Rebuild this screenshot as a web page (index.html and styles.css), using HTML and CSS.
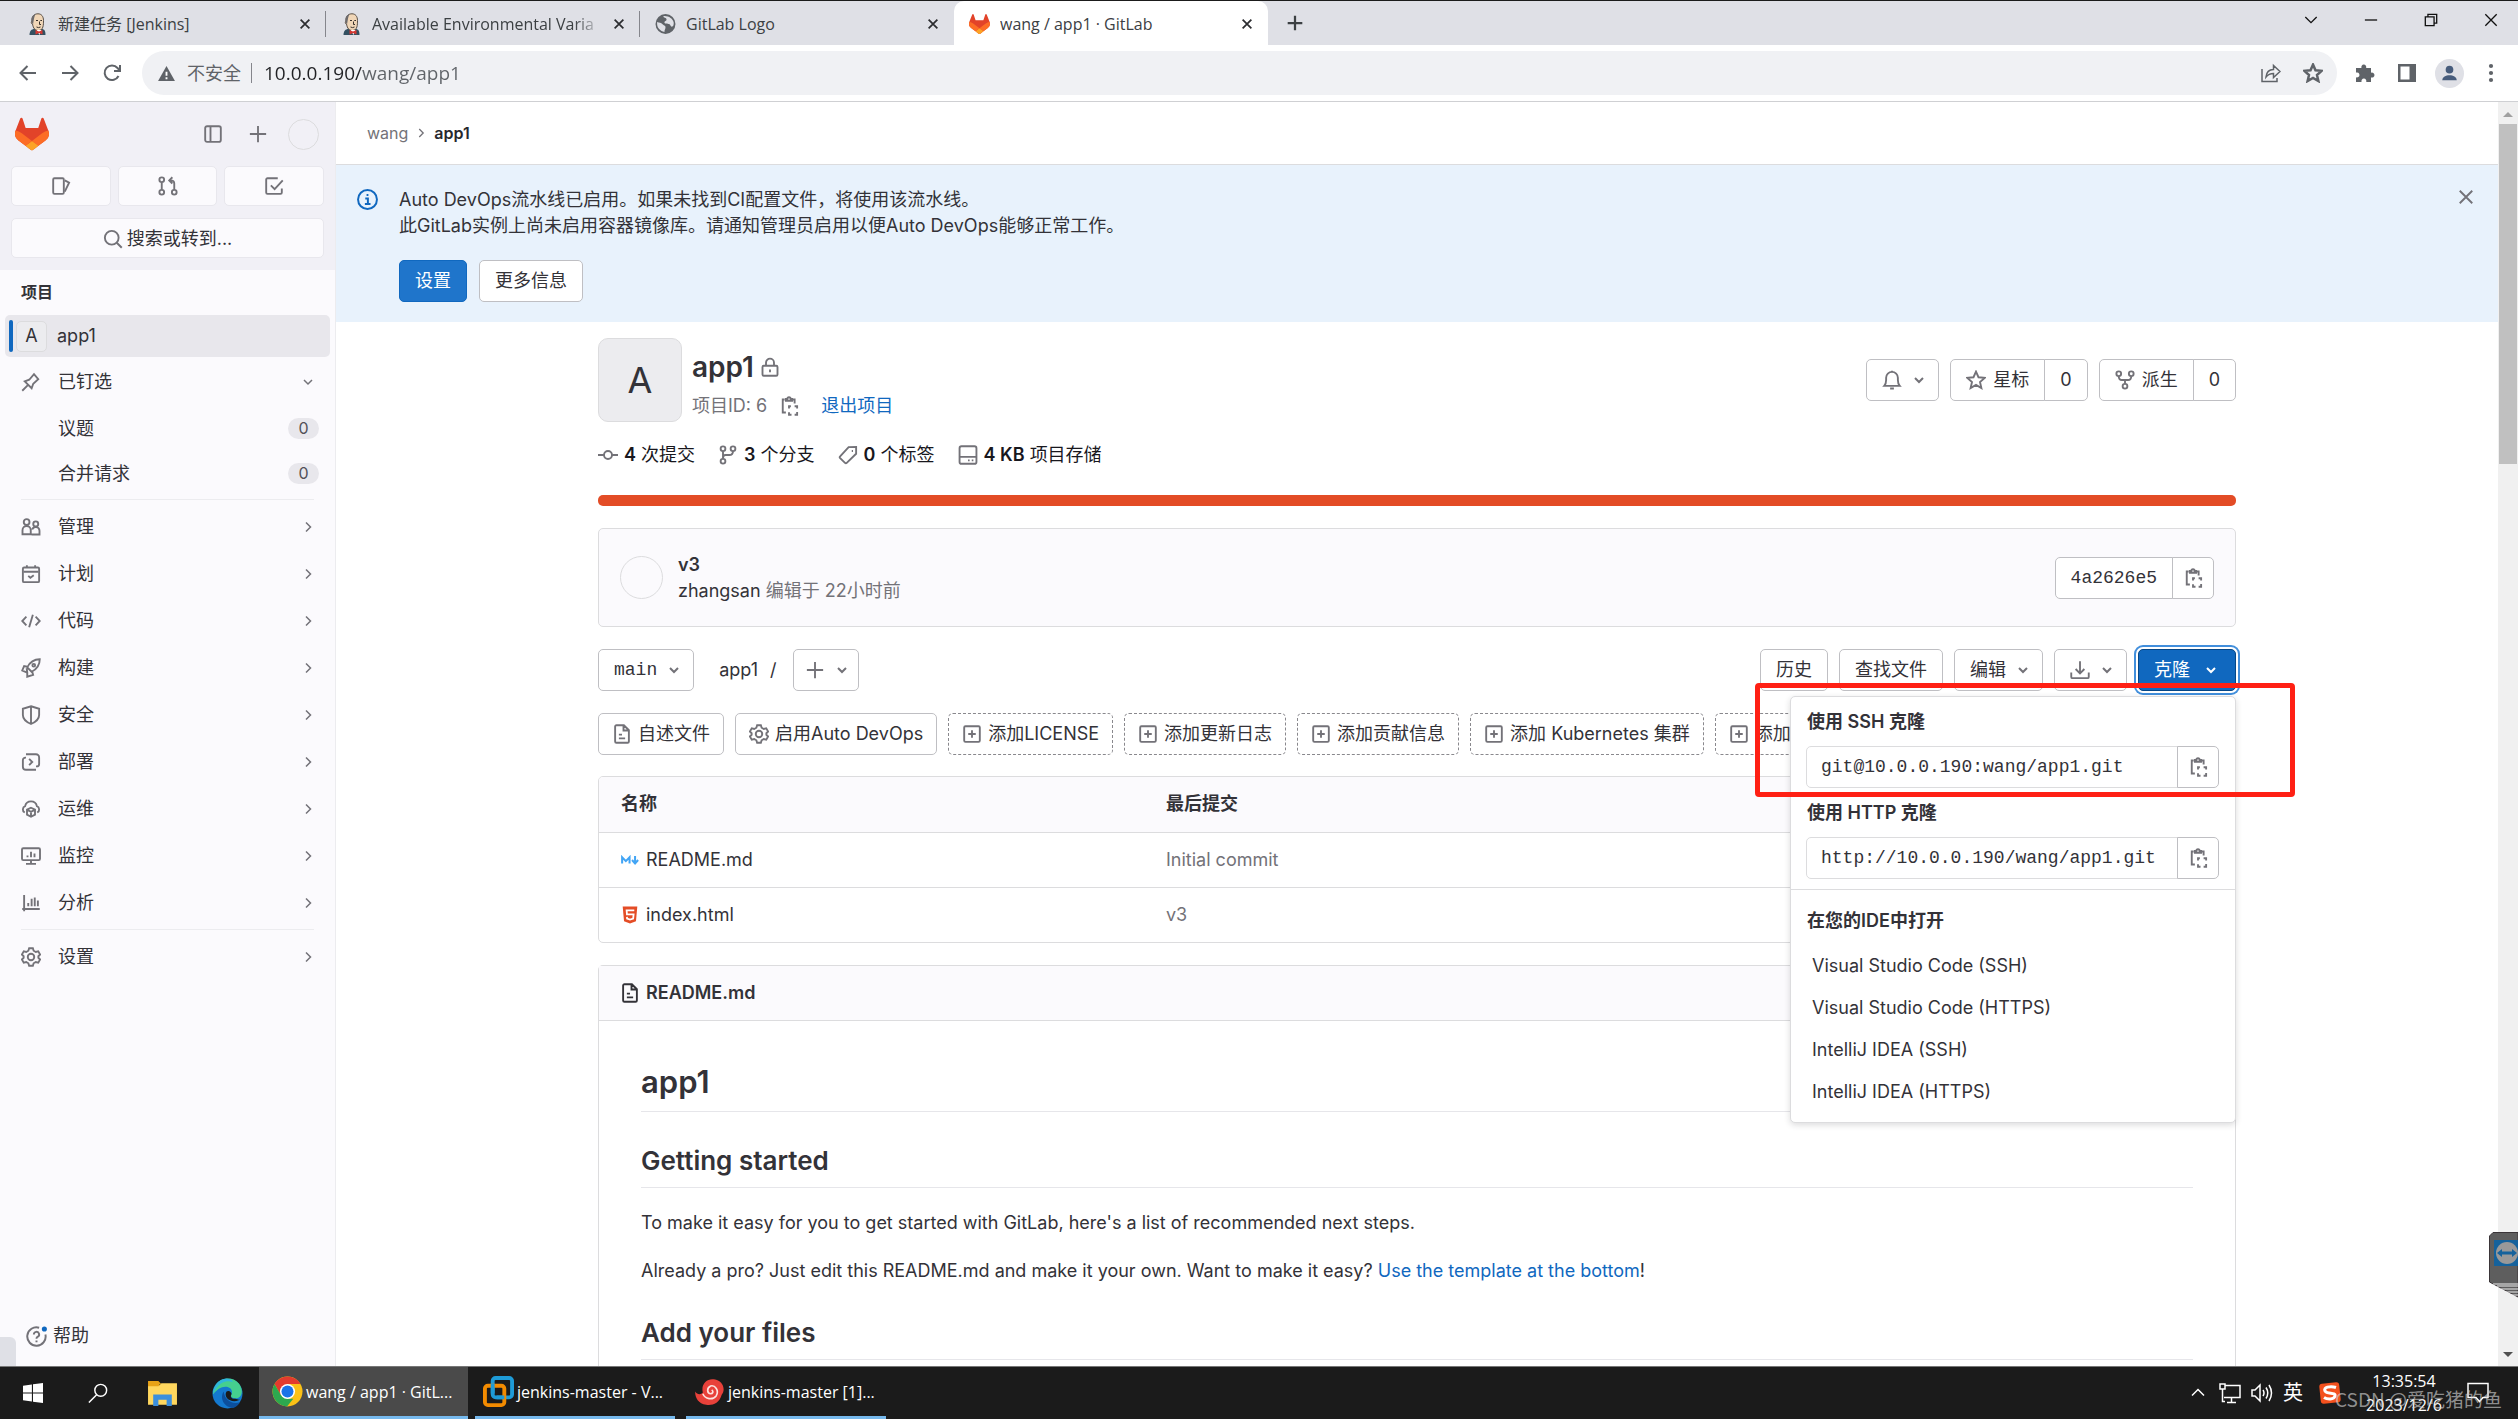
FILE: index.html
```html
<!DOCTYPE html>
<html lang="zh-CN">
<head>
<meta charset="utf-8">
<title>wang / app1 · GitLab</title>
<link rel="stylesheet" href="styles.css">
</head>
<body>
<svg class="sprite" aria-hidden="true">
  <symbol id="chev-right" viewBox="0 0 16 16"><path d="M6 3.500 10.500 8 6 12.500"/></symbol>
  <symbol id="chev-down" viewBox="0 0 16 16"><path d="M4 6l4 4 4-4"/></symbol>
  <symbol id="plus" viewBox="0 0 16 16"><path d="M8 1.500v13M1.500 8h13"/></symbol>
  <symbol id="close" viewBox="0 0 16 16"><path d="M3 3l10 10M13 3L3 13"/></symbol>
  <symbol id="copy" viewBox="0 0 16 16"><path d="M4.500 2.800H3v10.400h2.500M10.500 2.800H12.500V6M5.500 3.800V2.300h1.200a1.300 1.300 0 0 1 2.600 0h1.200v1.500zM8 10V8.200h1.500M12.500 8.200H14.500V10M14.500 12.800V15h-2M10 15H8v-2"/></symbol>
  <symbol id="search" viewBox="0 0 16 16"><circle cx="7" cy="7" r="5.500"/><path d="M11 11l4 4"/></symbol>
  <symbol id="panel" viewBox="0 0 16 16"><rect x="1.750" y="1.750" width="12.500" height="12.500" rx="1.500"/><path d="M6 2v12"/></symbol>
  <symbol id="issues" viewBox="0 0 16 16"><rect x="1.750" y="1.750" width="8.500" height="12.500" rx="1"/><path d="M11 3.500l3.500 1.800L11 12.500"/></symbol>
  <symbol id="merge" viewBox="0 0 16 16"><circle cx="3" cy="3" r="1.900"/><circle cx="3" cy="13" r="1.900"/><circle cx="13" cy="13" r="1.900"/><path d="M3 5v6M13 11V6q0-2.500-3-2.500M11.500 1L9 3.500 11.500 6"/></symbol>
  <symbol id="todo" viewBox="0 0 16 16"><path d="M11 1.750H2.750a1 1 0 0 0-1 1v10.500a1 1 0 0 0 1 1h10.500a1 1 0 0 0 1-1V10M5.500 7.500L8.500 10.500 15 3.500"/></symbol>
  <symbol id="info" viewBox="0 0 16 16"><circle cx="8" cy="8" r="7.200"/><path d="M6.300 7.300H8.300v4M6 11.500h4.300M7.300 4.500h1.400"/></symbol>
  <symbol id="pin" viewBox="0 0 16 16"><path d="M1 15l4.500-4.500M3 7.500l5.500 5.500 1.300-3.600 4-3.600L10.400 1.700 6.600 6.200z"/></symbol>
  <symbol id="users" viewBox="0 0 16 16"><circle cx="4.500" cy="4" r="2.300"/><path d="M1.200 13.800V10.500a3.300 3.300 0 0 1 6.600 0v3.300zM8.500 14h6.300v-3a3 3 0 0 0-5.800-1"/><circle cx="11.800" cy="5.500" r="2"/></symbol>
  <symbol id="calendar" viewBox="0 0 16 16"><rect x="1.500" y="2.800" width="13" height="11.700" rx="1"/><path d="M2 6.200h12M4.700 1v2M11.300 1v2M5.800 9.500L7.500 11l2.700-2"/></symbol>
  <symbol id="code" viewBox="0 0 16 16"><path d="M4.300 4.500L1 8l3.300 3.500M11.700 4.500L15 8l-3.300 3.500M9.500 3l-3 10"/></symbol>
  <symbol id="rocket" viewBox="0 0 16 16"><path d="M5 7.500C7 3.500 10.500 1 15 1c0 4.500-2.500 8-6.500 10zM5 7L2.500 6.500 1 10l3.500 1.500M9 11l.7 2.500L5 15v-3.500L4.500 8"/><circle cx="10.200" cy="5.800" r="1.100"/></symbol>
  <symbol id="shield" viewBox="0 0 16 16"><path d="M8 1L14.500 3v5c0 3-2.500 5.500-6.500 7.200C4 13.500 1.500 11 1.500 8V3zM8 1v14"/></symbol>
  <symbol id="deploy" viewBox="0 0 16 16"><path d="M4 1.800h8a2.500 2.500 0 0 1 2.500 2.500v5.200a2 2 0 0 1-2 2H12M12 14.200H4a2.500 2.500 0 0 1-2.500-2.500V6.500a2 2 0 0 1 2-2H4M6.500 5.500L9 8l-2.500 2.500"/></symbol>
  <symbol id="cloud" viewBox="0 0 16 16"><path d="M3 10.800A2.800 2.800 0 0 1 3.300 5.700a4.800 4.800 0 0 1 9.400 0 2.800 2.800 0 0 1 .3 5.100M8 7l3.200 1.500V12.500L8 14.200 4.800 12.500V8.500zM5 8.700L8 10.200l3-1.500M8 10v4"/></symbol>
  <symbol id="monitor" viewBox="0 0 16 16"><rect x=".8" y="1.750" width="14.400" height="9.500" rx="1"/><path d="M8 11.500v2.500M4 14.300h8M5.200 7.500v1.500M8 4.500V9M10.800 6v3"/></symbol>
  <symbol id="chart" viewBox="0 0 16 16"><path d="M2.500 1.500v13M1 12.800h14M5.800 8v2.500M8.500 4.500v6M11 3.500v7M13.500 6v4.500"/></symbol>
  <symbol id="gear" viewBox="0 0 16 16"><path d="M6.500 1h3l.6 2 1.700 1 2-.6 1.500 2.600L13.900 7.400v1.200l1.400 1.400-1.500 2.600-2-.6-1.700 1-.6 2h-3l-.6-2-1.700-1-2 .6L.7 10l1.400-1.400V7.400L.7 6l1.500-2.600 2 .6 1.700-1z"/><circle cx="8" cy="8" r="2.600"/></symbol>
  <symbol id="help" viewBox="0 0 16 16"><path d="M10 1.300A7 7 0 1 0 14.800 6.500"/><path d="M6 6.500a2 2 0 1 1 2.800 1.800q-.8.400-.8 1.400M8 11v1.400"/><circle cx="14" cy="2.300" r="1.200" class="dot"/></symbol>
  <symbol id="lock" viewBox="0 0 16 16"><rect x="2" y="7" width="12" height="8" rx="1"/><path d="M4.800 7V4.500a3.200 3.200 0 0 1 6.400 0V7M8 10v2.200"/></symbol>
  <symbol id="commit" viewBox="0 0 16 16"><circle cx="8" cy="8" r="3.200"/><path d="M0 8h4.800M11.200 8H16"/></symbol>
  <symbol id="branch" viewBox="0 0 16 16"><circle cx="4" cy="3" r="1.900"/><circle cx="4" cy="13" r="1.900"/><circle cx="12" cy="3" r="1.900"/><path d="M4 5v6M12 5q0 3-3 3H6Q4 8 4 10.500"/></symbol>
  <symbol id="tag" viewBox="0 0 16 16"><path d="M8.500 1.700L14.500 1.500 14.500 7 7 14.300a1 1 0 0 1-1.400 0L1.700 10.500a1 1 0 0 1 0-1.400z"/><path d="M11 4.800h1"/></symbol>
  <symbol id="disk" viewBox="0 0 16 16"><rect x="1.250" y="1" width="13.500" height="14" rx="1.500"/><path d="M1.500 9.500h13M8 12.300h1.300M11 12.300h1.300"/></symbol>
  <symbol id="bell" viewBox="0 0 16 16"><path d="M1.800 12.700Q3.300 11 3.300 8V6.200a4.700 4.700 0 0 1 9.400 0V8q0 3 1.500 4.700zM6.500 14.800h3M8 .5v1"/></symbol>
  <symbol id="star" viewBox="0 0 16 16"><path d="M8 1.300l2 4.500 4.900.5-3.700 3.300 1.100 4.800L8 11.900l-4.300 2.500 1.100-4.800L1.100 6.300 6 5.800z"/></symbol>
  <symbol id="fork" viewBox="0 0 16 16"><circle cx="3" cy="3" r="1.900"/><circle cx="13" cy="3" r="1.900"/><circle cx="8" cy="13" r="1.900"/><path d="M3 5q0 3 2.500 3h5Q13 8 13 5M8 8v3"/></symbol>
  <symbol id="download" viewBox="0 0 16 16"><path d="M8 1v9.500M4.500 7.200L8 10.700l3.500-3.500M1 10v3.500a1 1 0 0 0 1 1h12a1 1 0 0 0 1-1V10"/></symbol>
  <symbol id="doc" viewBox="0 0 16 16"><path d="M9.500 1H3.500a1 1 0 0 0-1 1v12a1 1 0 0 0 1 1h9a1 1 0 0 0 1-1V5zM9.200 1v4.200h4M5.500 8.500H8M5.500 11.500h5"/></symbol>
  <symbol id="add" viewBox="0 0 16 16"><rect x="1.750" y="1.750" width="12.500" height="12.500" rx="1"/><path d="M8 5v6M5 8h6"/></symbol>
  <symbol id="tanuki" viewBox="0 0 25 24"><path fill="#e24329" d="m24.507 9.500-.034-.09L21.082.562a.896.896 0 0 0-1.694.091l-2.290 7.010H7.825L5.535.653a.898.898 0 0 0-1.694-.09L.451 9.411.416 9.500a6.297 6.297 0 0 0 2.090 7.278l.012.010.030.022 5.160 3.867 2.560 1.935 1.554 1.176a1.051 1.051 0 0 0 1.268 0l1.555-1.176 2.560-1.935 5.197-3.890.014-.010A6.297 6.297 0 0 0 24.507 9.500Z"/><path fill="#fc6d26" d="m24.507 9.500-.034-.09a11.440 11.440 0 0 0-4.560 2.051l-7.447 5.632 4.742 3.584 5.197-3.890.014-.010A6.297 6.297 0 0 0 24.507 9.500Z"/><path fill="#fca326" d="m7.707 20.677 2.560 1.935 1.555 1.176a1.051 1.051 0 0 0 1.268 0l1.555-1.176 2.560-1.935-4.743-3.584-4.755 3.584Z"/><path fill="#fc6d26" d="M5.010 11.461a11.430 11.430 0 0 0-4.560-2.050L.416 9.500a6.297 6.297 0 0 0 2.090 7.278l.012.010.030.022 5.160 3.867 4.745-3.584-7.444-5.632Z"/></symbol>
  <symbol id="butler" viewBox="0 0 20 22"><path fill="#335061" d="M2 22c0-4 2-6 5-6h7c3 0 4 2 4 6z"/><path fill="#f0d6b7" stroke="#4a4038" stroke-width=".9" d="M4.500 8C4 3 7 .8 10.500.8S16 3.500 16 7.500s0 10-5 10S5.500 13 5 11C3.500 11 3.500 8.500 4.500 8z"/><path fill="#6d6b6d" d="M4 9C3.500 4 5.500 1.500 8 1.200 6.500 4 6.500 6 6 8.500l-.5 3z"/><path fill="none" stroke="#3a322c" d="M8.500 7.500h2M12.800 7.500h1.700M12 8.500v3h1.500M9 14q2 1.200 4 0"/><path fill="#fff" d="M9 17h5l-2 5z"/><path fill="#d33833" d="M8 17l3.500 1.500L15 17v4.500l-3.500-1.500L8 21.500z"/></symbol>
</svg>

<div class="tabs" role="tablist">
  <div class="tab"><svg class="fav"><use href="#butler"/></svg><span class="tab-title">新建任务 [Jenkins]</span><button class="tab-x" aria-label="关闭"><svg class="icon"><use href="#close"/></svg></button></div>
  <div class="tab"><svg class="fav"><use href="#butler"/></svg><span class="tab-title fade">Available Environmental Varia</span><button class="tab-x" aria-label="关闭"><svg class="icon"><use href="#close"/></svg></button></div>
  <div class="tab plain"><svg class="fav" viewBox="0 0 20 20"><circle cx="10" cy="10" r="9.500" fill="#5f6368"/><path fill="#dfe0e6" d="M2 8c2 1 4 .5 5 2s3 1 3 3-1 2-1 4.500C5 17 2 13.500 2 10zM8 2.500c0 2 3 1 3 3s-2 1.500-2 3 3 1 4.500 1.500 1 2.500 2.500 2.500 2-2 1.800-4C17 5 13 2 8 2.500z"/></svg><span class="tab-title">GitLab Logo</span><button class="tab-x" aria-label="关闭"><svg class="icon"><use href="#close"/></svg></button></div>
  <div class="tab active"><svg class="fav"><use href="#tanuki"/></svg><span class="tab-title">wang / app1 · GitLab</span><button class="tab-x" aria-label="关闭"><svg class="icon"><use href="#close"/></svg></button></div>
  <button class="tab-new" aria-label="新标签页"><svg class="icon"><use href="#plus"/></svg></button>
  <div class="win">
    <button aria-label="搜索标签页"><svg viewBox="0 0 16 16"><path d="M1.500 4.500L8 11l6.500-6.500"/></svg></button>
    <button aria-label="最小化"><svg viewBox="0 0 16 16"><path d="M1 8h14"/></svg></button>
    <button aria-label="还原"><svg viewBox="0 0 16 16"><path d="M1.500 4.500h10v10h-10zM4.500 4.500v-3h10v10h-3"/></svg></button>
    <button aria-label="关闭窗口"><svg viewBox="0 0 16 16"><path d="M1.500 1.500l13 13M14.500 1.500l-13 13"/></svg></button>
  </div>
</div>

<div class="toolbar">
  <button class="nav" aria-label="后退"><svg viewBox="0 0 20 20"><path d="M18 10H3M9.500 3L2.500 10l7 7"/></svg></button>
  <button class="nav" aria-label="前进"><svg viewBox="0 0 20 20"><path d="M2 10h15M10.500 3l7 7-7 7"/></svg></button>
  <button class="nav" aria-label="刷新"><svg viewBox="0 0 20 20"><path d="M16.500 13A7.300 7.300 0 1 1 15.500 5l2 2.500M18 2v6h-6"/></svg></button>
  <div class="omni">
    <svg class="warn" viewBox="0 0 18 16"><path fill="#5f6368" d="M9 0l9 16H0z"/><path stroke="#fff" stroke-width="2" d="M9 6v4.500M9 12v2"/></svg>
    <label for="url">不安全</label>
    <input id="url" value="10.0.0.190/wang/app1">
    <button aria-label="分享"><svg viewBox="0 0 20 20"><path class="thin" d="M1 6v12.500h15V15M5 14c.5-5 3.500-7.500 7.500-7.500V2.500L19 8.500l-6.500 6v-4C9 10.500 7 11.500 5 14z"/></svg></button>
    <button aria-label="收藏"><svg viewBox="0 0 16 16"><use href="#star"/></svg></button>
  </div>
  <div class="ext">
    <button aria-label="扩展程序"><svg viewBox="0 0 20 20"><path fill="#5f6368" stroke="none" d="M1 5h5.500a2.500 2.500 0 1 1 4.600 0H16v4.800a2.500 2.500 0 1 1 0 4.600V19h-4.800a2.500 2.500 0 1 0-4.600 0H1v-4.800a2.500 2.500 0 1 0 0-4.600z"/></svg></button>
    <button aria-label="侧边栏"><svg viewBox="0 0 20 20"><path fill="#5f6368" fill-rule="evenodd" stroke="none" d="M1 1h18v18H1zM3.500 3.500v13h9v-13z"/></svg></button>
    <button aria-label="用户"><span class="me"><svg viewBox="0 0 20 20"><circle cx="10" cy="5.500" r="4.500" fill="#475c7c" stroke="none"/><path fill="#475c7c" stroke="none" d="M1.500 18c0-8 17-8 17 0z"/></svg></span></button>
    <button aria-label="菜单"><svg viewBox="0 0 20 20"><g fill="#5f6368" stroke="none"><circle cx="10" cy="3" r="2.100"/><circle cx="10" cy="10" r="2.100"/><circle cx="10" cy="17" r="2.100"/></g></svg></button>
  </div>
</div>

<div class="page">
  <aside class="sidebar">
    <div class="side-top">
      <div class="side-row">
        <a href="#" aria-label="首页"><svg class="logo"><use href="#tanuki"/></svg></a>
        <button class="bare" aria-label="收起侧边栏"><svg class="icon"><use href="#panel"/></svg></button>
        <button class="bare" aria-label="新建"><svg class="icon"><use href="#plus"/></svg></button>
        <button class="circle small" aria-label="用户菜单"></button>
      </div>
      <div class="side-row three">
        <a class="tile" href="#" aria-label="议题"><svg class="icon"><use href="#issues"/></svg></a>
        <a class="tile" href="#" aria-label="合并请求"><svg class="icon"><use href="#merge"/></svg></a>
        <a class="tile" href="#" aria-label="待办事项"><svg class="icon"><use href="#todo"/></svg></a>
      </div>
      <button class="tile wide"><svg class="icon"><use href="#search"/></svg>搜索或转到...</button>
    </div>
    <nav class="menu">
      <h2>项目</h2>
      <a class="current" href="#"><span class="letter">A</span>app1</a>
      <a class="pinned" href="#"><svg class="icon"><use href="#pin"/></svg>已钉选<svg class="icon chev"><use href="#chev-down"/></svg></a>
      <a class="sub" href="#">议题<span class="badge">0</span></a>
      <a class="sub" href="#">合并请求<span class="badge">0</span></a>
      <hr>
      <a href="#"><svg class="icon"><use href="#users"/></svg>管理<svg class="icon chev"><use href="#chev-right"/></svg></a>
      <a href="#"><svg class="icon"><use href="#calendar"/></svg>计划<svg class="icon chev"><use href="#chev-right"/></svg></a>
      <a href="#"><svg class="icon"><use href="#code"/></svg>代码<svg class="icon chev"><use href="#chev-right"/></svg></a>
      <a href="#"><svg class="icon"><use href="#rocket"/></svg>构建<svg class="icon chev"><use href="#chev-right"/></svg></a>
      <a href="#"><svg class="icon"><use href="#shield"/></svg>安全<svg class="icon chev"><use href="#chev-right"/></svg></a>
      <a href="#"><svg class="icon"><use href="#deploy"/></svg>部署<svg class="icon chev"><use href="#chev-right"/></svg></a>
      <a href="#"><svg class="icon"><use href="#cloud"/></svg>运维<svg class="icon chev"><use href="#chev-right"/></svg></a>
      <a href="#"><svg class="icon"><use href="#monitor"/></svg>监控<svg class="icon chev"><use href="#chev-right"/></svg></a>
      <a href="#"><svg class="icon"><use href="#chart"/></svg>分析<svg class="icon chev"><use href="#chev-right"/></svg></a>
      <hr>
      <a href="#"><svg class="icon"><use href="#gear"/></svg>设置<svg class="icon chev"><use href="#chev-right"/></svg></a>
    </nav>
    <button class="help"><svg class="icon"><use href="#help"/></svg>帮助</button>
    <div class="status"></div>
  </aside>

  <main class="main">
    <nav class="crumbs"><a href="#">wang</a><svg class="icon"><use href="#chev-right"/></svg><a class="here" href="#">app1</a></nav>
    <section class="alert">
      <svg class="icon"><use href="#info"/></svg>
      <div class="alert-body">
        <p>Auto DevOps流水线已启用。如果未找到CI配置文件，将使用该流水线。<br>此GitLab实例上尚未启用容器镜像库。请通知管理员启用以便Auto DevOps能够正常工作。</p>
        <div class="alert-actions"><button class="btn primary">设置</button><button class="btn">更多信息</button></div>
      </div>
      <button class="bare" aria-label="关闭提示"><svg class="icon"><use href="#close"/></svg></button>
    </section>

    <div class="content">
      <header class="project">
        <div class="avatar">A</div>
        <div class="names">
          <h1>app1<svg class="icon"><use href="#lock"/></svg></h1>
          <div class="ids"><span>项目ID: 6</span><button class="bare" aria-label="复制项目ID"><svg class="icon"><use href="#copy"/></svg></button><a href="#">退出项目</a></div>
        </div>
        <div class="actions">
          <button class="btn" aria-label="通知"><svg class="icon"><use href="#bell"/></svg><svg class="icon chev"><use href="#chev-down"/></svg></button>
          <div class="group"><button class="btn"><svg class="icon"><use href="#star"/></svg>星标</button><a class="btn" href="#">0</a></div>
          <div class="group"><button class="btn"><svg class="icon"><use href="#fork"/></svg>派生</button><a class="btn" href="#">0</a></div>
        </div>
      </header>

      <div class="stats">
        <a href="#"><svg class="icon"><use href="#commit"/></svg><span><b>4</b> 次提交</span></a>
        <a href="#"><svg class="icon"><use href="#branch"/></svg><span><b>3</b> 个分支</span></a>
        <a href="#"><svg class="icon"><use href="#tag"/></svg><span><b>0</b> 个标签</span></a>
        <a href="#"><svg class="icon"><use href="#disk"/></svg><span><b>4 KB</b> 项目存储</span></a>
      </div>
      <div class="langbar"></div>

      <section class="commit">
        <div class="circle"></div>
        <div class="commit-text"><a class="strong" href="#">v3</a><p><a href="#">zhangsan</a> 编辑于 22小时前</p></div>
        <div class="group"><span class="btn mono">4a2626e5</span><button class="btn" aria-label="复制提交SHA"><svg class="icon"><use href="#copy"/></svg></button></div>
      </section>

      <div class="tree">
        <button class="btn mono">main<svg class="icon chev"><use href="#chev-down"/></svg></button>
        <div class="path"><a href="#">app1</a><span>/</span></div>
        <button class="btn add" aria-label="添加"><svg class="icon"><use href="#plus"/></svg><svg class="icon chev"><use href="#chev-down"/></svg></button>
        <div class="tree-right">
          <a class="btn" href="#">历史</a>
          <a class="btn" href="#">查找文件</a>
          <button class="btn">编辑<svg class="icon chev"><use href="#chev-down"/></svg></button>
          <button class="btn" aria-label="下载"><svg class="icon"><use href="#download"/></svg><svg class="icon chev"><use href="#chev-down"/></svg></button>
          <div class="clone">
            <button class="btn primary focus">克隆<svg class="icon chev"><use href="#chev-down"/></svg></button>
            <div class="dropdown">
              <div class="urls">
                <label for="ssh">使用 SSH 克隆</label>
                <div class="group"><input id="ssh" class="mono" readonly value="git@10.0.0.190:wang/app1.git"><button class="btn" aria-label="复制SSH地址"><svg class="icon"><use href="#copy"/></svg></button></div>
                <label for="http">使用 HTTP 克隆</label>
                <div class="group"><input id="http" class="mono" readonly value="http://10.0.0.190/wang/app1.git"><button class="btn" aria-label="复制HTTP地址"><svg class="icon"><use href="#copy"/></svg></button></div>
              </div>
              <div class="ide">
                <h3>在您的IDE中打开</h3>
                <a href="#">Visual Studio Code (SSH)</a>
                <a href="#">Visual Studio Code (HTTPS)</a>
                <a href="#">IntelliJ IDEA (SSH)</a>
                <a href="#">IntelliJ IDEA (HTTPS)</a>
              </div>
            </div>
            <div class="marker"></div>
          </div>
        </div>
      </div>

      <div class="chips">
        <a class="btn" href="#"><svg class="icon"><use href="#doc"/></svg>自述文件</a>
        <a class="btn" href="#"><svg class="icon"><use href="#gear"/></svg>启用Auto DevOps</a>
        <a class="btn dashed" href="#"><svg class="icon"><use href="#add"/></svg>添加LICENSE</a>
        <a class="btn dashed" href="#"><svg class="icon"><use href="#add"/></svg>添加更新日志</a>
        <a class="btn dashed" href="#"><svg class="icon"><use href="#add"/></svg>添加贡献信息</a>
        <a class="btn dashed" href="#"><svg class="icon"><use href="#add"/></svg>添加 Kubernetes 集群</a>
        <a class="btn dashed" href="#"><svg class="icon"><use href="#add"/></svg>添加Wiki</a>
      </div>

      <div class="files">
        <table>
          <thead><tr><th class="col-name">名称</th><th>最后提交</th></tr></thead>
          <tbody>
            <tr><td><a href="#"><svg class="ficon" viewBox="0 0 16 16"><path fill="none" stroke="#42a5f5" stroke-width="1.800" d="M1 11V5.500L4.300 9 7.600 5.500V11M12.500 4.500v5.500M9.800 8l2.700 3 2.700-3"/></svg>README.md</a></td><td><a class="muted" href="#">Initial commit</a></td></tr>
            <tr><td><a href="#"><svg class="ficon" viewBox="0 0 16 16"><path fill="#e44d26" d="M1.500.5h13l-1.200 13L8 15.500l-5.300-2z"/><path fill="none" stroke="#fff" stroke-width="1.600" d="M11.800 3.800H5l.3 3.700h5.900l-.4 3.700L8 12l-2.600-.8-.1-1.500"/></svg>index.html</a></td><td><a class="muted" href="#">v3</a></td></tr>
          </tbody>
        </table>
      </div>

      <article class="readme">
        <header><svg class="icon"><use href="#doc"/></svg><a href="#">README.md</a></header>
        <div class="md">
          <h1>app1</h1>
          <h2>Getting started</h2>
          <p>To make it easy for you to get started with GitLab, here's a list of recommended next steps.</p>
          <p>Already a pro? Just edit this README.md and make it your own. Want to make it easy? <a href="#">Use the template at the bottom</a>!</p>
          <h2>Add your files</h2>
        </div>
      </article>
    </div>
  </main>

  <div class="scroll"><i class="up"></i><div class="thumb"></div><i class="down"></i></div>
  <div class="remote"><svg viewBox="0 0 29 66"><path fill="#5e5e5e" stroke="#3a3538" d="M29 .5H4L.5 4v46L29 65z"/><path stroke="#eee" stroke-width="1" d="M4 52h25M8 54h21M12 57h17M16 60h13M22 63h7"/><path fill="#15629c" d="M5 8h24v26H5z"/><circle cx="18" cy="21" r="11" fill="#999"/><path fill="#15629c" d="M8 21l5-4v2.500h10V17l5 4-5 4v-2.500H13V25z"/></svg></div>
</div>

<footer class="taskbar">
  <button class="task icon-only" aria-label="开始"><svg viewBox="0 0 18 18"><path fill="#fff" d="M0 2.500L8 1.300V8.500H0zM9 1.200L18 0v8.500H9zM0 9.500h8v7.200L0 15.500zM9 9.500h9V18l-9-1.200z"/></svg></button>
  <button class="task icon-only" aria-label="搜索"><svg viewBox="0 0 22 22"><circle cx="14" cy="8" r="6.500" fill="none" stroke="#fff" stroke-width="1.600"/><path stroke="#fff" stroke-width="1.600" d="M9.500 13L1 21.500"/></svg></button>
  <button class="task icon-only" aria-label="文件资源管理器"><svg class="big" viewBox="0 0 30 26"><path fill="#e8a317" d="M1 1h10l3 3h-2v5H1z"/><path fill="#ffd75e" d="M1 6h10l3-3h15v21H1z"/><path fill="#3c8fdc" d="M6 14h18v11h-5v-6h-8v6H6z"/></svg></button>
  <button class="task icon-only" aria-label="Edge"><svg class="big" viewBox="0 0 32 32"><circle cx="16" cy="16" r="15.500" fill="#1479cf"/><path fill="#45cf8f" d="M4 7C9-1 22-2 28 6c5 7 3 15-4 15-4 0-5-2-4-4 2-4-1-8-6-8C9 9 5 12 1 17 1 13 2 10 4 7z"/><path fill="#2fb5dd" d="M4 7C9 0 18-1 22 4c-7-2-13 0-18 7-2 3-3 5-3 6 0-4 1-7 3-10z"/><path fill="#0c4f9c" d="M12 14c-5 8 2 17 10 17 3-1 6-4 7-6-9 3-16-3-17-11z"/><path fill="#1b1b1b" d="M15 14c-3 5 2 10 8 10 3 0 5-1 6-2-1 1-3 0-5-.5-5 0-5-3-4-4.500 1-2-3-5-5-3z"/></svg></button>
  <button class="task app on"><svg class="big" viewBox="0 0 32 32"><circle cx="16" cy="16" r="15.500" fill="#fbc116"/><path fill="#e33b2e" d="M2.600 8.300A15.500 15.500 0 0 1 29.400 8.300H16L9.300 20z"/><path fill="#2da94f" d="M2.600 8.300L9.300 19.900 16 23.500h6L15.500 31.500A15.500 15.500 0 0 1 2.600 8.300z"/><circle cx="16" cy="16" r="7.800" fill="#fff"/><circle cx="16" cy="16" r="6.200" fill="#1a73e8"/></svg><span>wang / app1 · GitL...</span></button>
  <button class="task app"><svg class="big" viewBox="0 0 32 32"><rect x="10" y="2" width="20" height="20" rx="3" fill="none" stroke="#1e9bd7" stroke-width="4"/><rect x="2" y="10" width="20" height="20" rx="3" fill="none" stroke="#f38b00" stroke-width="4"/><path stroke="#1e9bd7" stroke-width="4" d="M10 8v10M22 22h-8"/></svg><span>jenkins-master - V...</span></button>
  <button class="task app"><svg class="big" viewBox="0 0 28 28"><path fill="#e8413a" d="M1 14c2 3 5 3 7 1-2-8 4-13 10-12 8 1 11 9 7 14-2 8-9 10-14 9C4 25 1 20 1 14z"/><path fill="none" stroke="#fbe3e0" stroke-width="1.500" d="M8 16c2 5 9 6 12 2 3-5-1-10-5-9-4 2-3 7 0 7 2 0 3-2 1-3.500"/></svg><span>jenkins-master [1]...</span></button>
  <div class="tray">
    <svg viewBox="0 0 22 22"><path d="M5 13.500l6-6 6 6"/></svg>
    <svg viewBox="0 0 22 22"><path d="M6 3.500h15v12H5M12.500 16v4M8 20.500h9M1 2h5v5H1zM3.500 7v12.500H6"/></svg>
    <svg viewBox="0 0 22 22"><path d="M1 8h3l5-5v16l-5-5H1zM12 8q2 3 0 6M15 5.500q3.500 5.500 0 11M18 3q5 8 0 16"/></svg>
    <span class="ime">英</span>
    <svg class="sogou" viewBox="0 0 22 22"><rect x="1" y="1" width="20" height="20" rx="3" fill="#f4511e" stroke="none" transform="rotate(-6 11 11)"/><path class="s" d="M17 5.500C11 3.500 4 5.500 6 9s11 1 10 5-8 3.500-11 1.500"/></svg>
    <div class="clock"><span>13:35:54</span><span>2023/12/6</span></div>
    <svg viewBox="0 0 22 22"><path d="M1 1.500h20v14h-5l-3.500 4-3.500-4H1z"/></svg>
  </div>
  <div class="watermark">CSDN @爱吃猪的鱼</div>
</footer>
</body>
</html>
```
FILE: styles.css
```css
* { box-sizing: border-box; }

body {
  margin: 0;
  height: 100vh;
  overflow: hidden;
  display: flex;
  flex-direction: column;
  background: #fff;
  color: #333238;
  font: 18px/26px Inter, "Noto Sans CJK SC", sans-serif;
}

a { color: inherit; text-decoration: none; }
p, h1, h2, h3 { margin: 0; }
button, input { font: inherit; color: inherit; margin: 0; }
button { padding: 0; border: 0; background: none; }
svg { flex: none; fill: none; }

.sprite { position: absolute; width: 0; height: 0; }
.icon { width: 20px; height: 20px; stroke: #737278; stroke-width: 1.5; }
.chev { width: 16px; height: 16px; stroke-width: 2; }
.dot { fill: #1068bf; stroke: #1068bf; }
.mono { font-family: "Liberation Mono", monospace; }
.bare { display: flex; }

/* browser tabs */
.tabs {
  height: 45px;
  flex: none;
  display: flex;
  padding-left: 12px;
  background: #dfe0e6;
  border-top: 1px solid #1b1b1b;
  color: #3c4043;
  font: 16px/24px "Open Sans", "Noto Sans CJK SC", sans-serif;
}
.tab { width: 314px; display: flex; align-items: center; gap: 10px; padding: 2px 14px 0 15px; position: relative; }
.tab::after { content: ""; position: absolute; right: 0; top: 10px; width: 1px; height: 26px; background: #85868c; }
.tab.plain::after, .tab.active::after { content: none; }
.tab.active { background: #fff; border-radius: 10px 10px 0 0; }
.fav { width: 21px; height: 22px; }
.tab-title { flex: 1; overflow: hidden; white-space: nowrap; }
.fade { -webkit-mask-image: linear-gradient(to right, #000 88%, transparent); mask-image: linear-gradient(to right, #000 88%, transparent); }
.tab-x { display: flex; }
.tab-x .icon { width: 14px; height: 14px; stroke: #2c2d30; stroke-width: 2; }
.tab-new { margin-left: 18px; display: flex; align-items: center; }
.tab-new .icon { stroke: #3c4043; stroke-width: 2; width: 18px; height: 18px; }
.win { margin-left: auto; display: flex; align-items: center; gap: 46px; padding: 0 20px 6px 0; }
.win button { display: flex; }
.win svg { width: 14px; height: 14px; stroke: #111; stroke-width: 1.5; }

/* browser toolbar */
.toolbar {
  height: 57px;
  flex: none;
  display: flex;
  align-items: center;
  gap: 22px;
  padding: 0 6px 0 18px;
  border-bottom: 1px solid #cfd0d3;
  background: #fff;
  font: 18px/26px "Open Sans", "Noto Sans CJK SC", sans-serif;
}
.toolbar svg { width: 20px; height: 20px; stroke: #5f6368; stroke-width: 2; display: block; }
.toolbar .thin { stroke-width: 1.5; }
.omni { flex: 1; height: 44px; margin-left: -2px; display: flex; align-items: center; gap: 12px; padding: 0 3px 0 16px; border-radius: 22px; background: #f0f1f4; color: #5f6368; }
.omni .warn { width: 17px; height: 15px; stroke: none; }
.omni label { padding-right: 10px; border-right: 1px solid #85868c; line-height: 20px; }
.omni input {
  flex: 1;
  padding: 0;
  border: 0;
  font-size: 19px;
  color: transparent;
  background: linear-gradient(to right, #202124 98px, #5f6368 98px);
  -webkit-background-clip: text;
  background-clip: text;
}
.omni button, .ext button { width: 42px; display: flex; justify-content: center; }
.omni button + button { margin-left: -12px; }
.ext { display: flex; align-items: center; margin-left: -15px; }
.me { width: 29px; height: 29px; border-radius: 50%; background: #dfe0e6; display: grid; place-items: center; }
.toolbar .me svg { width: 17px; height: 17px; }

/* page */
.page { flex: 1; min-height: 0; display: flex; position: relative; overflow: hidden; }

.sidebar { width: 336px; flex: none; display: flex; flex-direction: column; position: relative; background: #fbfafd; border-right: 1px solid #ececef; }
.side-top { background: #f1f0f6; padding: 16px 11px 12px; display: flex; flex-direction: column; }
.side-row { display: flex; align-items: center; }
.side-row:first-child { gap: 25px; padding: 0 5px 0 4px; height: 32px; }
.side-row:first-child a { margin-right: auto; }
.side-row .circle { margin-left: -5px; }
.logo { width: 34px; height: 34px; display: block; }
.circle { width: 43px; height: 43px; flex: none; border: 1px solid #dcdcde; border-radius: 50%; }
.circle.small { width: 31px; height: 31px; }
.three { gap: 7px; margin: 16px 0 12px; }
.tile { flex: 1; height: 40px; display: flex; align-items: center; justify-content: center; gap: 4px; border: 1px solid #e8e7ed; border-radius: 5px; background: #fbfafd; }
.side-top .wide { flex: none; padding-top: 1px; }

.menu { padding: 0 5px; }
.menu h2 { font-size: 16px; line-height: 24px; padding: 10px 16px 11px; }
.menu a { height: 47px; display: flex; align-items: center; gap: 17px; padding: 0 14px 0 16px; border-radius: 5px; }
.menu .chev { margin-left: auto; stroke-width: 1.5; }
.menu a.current { height: 42px; gap: 10px; padding-left: 4px; background: #e8e7ec; }
.menu a.pinned { height: 49px; }
.current::before { content: ""; width: 4px; height: 32px; border-radius: 2px; background: #1068bf; }
.current .letter { width: 31px; height: 31px; margin-left: -7px; display: grid; place-items: center; border: 1px solid #dcdcde; border-radius: 5px; background: #ececef; }
.menu a.sub { height: 45px; padding: 0 11px 0 53px; justify-content: space-between; }
.badge { width: 31px; height: 21px; border-radius: 11px; background: #e8e7ec; color: #535158; font-size: 16px; line-height: 21px; text-align: center; }
.menu hr { margin: 3px 16px; border: 0; border-top: 1px solid #ececef; }
.help { margin: auto auto 17px 26px; display: flex; align-items: center; gap: 6px; }
.help .icon { width: 21px; height: 21px; }
.status { position: absolute; left: 0; bottom: 0; width: 16px; height: 29px; background: #dfe0e6; border-radius: 0 6px 0 0; }

.main { flex: 1; min-width: 0; overflow: hidden; }
.crumbs { height: 63px; display: flex; align-items: center; gap: 6px; padding: 0 31px; border-bottom: 1px solid #dcdcde; font-size: 16px; color: #737278; }
.crumbs .icon { width: 14px; height: 14px; stroke-width: 1.5; }
.crumbs .here { color: #28272d; font-weight: 600; }

.alert { display: flex; align-items: flex-start; gap: 21px; padding: 22px 22px 20px 21px; background: #e8f2fc; }
.alert > .icon { width: 21px; height: 21px; margin-top: 2px; stroke: #1068bf; }
.alert-body { flex: 1; }
.alert-actions { display: flex; gap: 12px; margin-top: 21px; }

.btn { height: 42px; display: inline-flex; align-items: center; gap: 6px; padding: 0 15px; border: 1px solid #bfbfc3; border-radius: 5px; background: #fff; white-space: nowrap; }
.btn .chev { margin-left: 3px; margin-right: -4px; }
.btn.primary { background: #1f75cb; border-color: #1068bf; color: #fff; }
.btn.focus { gap: 10px; padding-right: 20px; background: #1068bf; border-color: #064787; box-shadow: 0 0 0 2px #fff, 0 0 0 4px #428fdc; }
.primary .icon { stroke: #fff; }
.btn.dashed { border-style: dashed; border-color: #89888d; }
.group { display: flex; }
.group > * { border-radius: 0; }
.group > :first-child { border-radius: 5px 0 0 5px; }
.group > :last-child { border-radius: 0 5px 5px 0; margin-left: -1px; }

.content { max-width: 1638px; margin: 0 auto; padding-top: 16px; }
.project { display: flex; align-items: flex-start; gap: 10px; }
.avatar { width: 84px; height: 84px; display: grid; place-items: center; border: 1px solid #dcdcde; border-radius: 10px; background: #ececef; font-size: 36px; }
.project h1 { display: flex; align-items: center; gap: 6px; font-size: 28px; line-height: 40px; margin-top: 9px; font-weight: 600; }
.ids { display: flex; align-items: center; gap: 12px; margin-top: 6px; color: #737278; }
.ids a { color: #1068bf; margin-left: 10px; }
.actions { margin: 21px 0 0 auto; display: flex; gap: 11px; }
.actions .group .btn { padding: 0 15px; gap: 7px; }

.stats { display: flex; gap: 23px; margin-top: 20px; color: #18171d; }
.stats a { display: flex; align-items: center; gap: 6px; }
.stats b { font-weight: 600; }
.langbar { height: 11px; margin-top: 27px; border-radius: 5px; background: #e34c26; }

.commit { display: flex; align-items: center; gap: 15px; height: 99px; margin-top: 22px; padding: 0 21px; border: 1px solid #dcdcde; border-radius: 5px; background: #fbfafd; }
.commit-text { flex: 1; color: #737278; }
.commit-text a { color: #333238; }
.commit-text .strong { font-weight: 600; }

.tree { display: flex; margin-top: 22px; }
.tree .add { padding: 0 12px 0 11px; }
.path { display: flex; align-items: center; gap: 12px; padding: 0 16px 0 25px; }
.tree-right { margin-left: auto; display: flex; gap: 11px; }
.clone { position: relative; }
.dropdown { position: absolute; z-index: 2; top: 47px; right: 0; width: 446px; border: 1px solid #dcdcde; border-radius: 5px; background: #fff; box-shadow: 0 2px 6px rgba(31, 30, 36, .16); }
.urls { padding: 12px 16px 10px 15px; border-bottom: 1px solid #dcdcde; }
.urls label { display: block; font-weight: 600; padding: 0 0 11px 1px; }
.urls .group + label { margin-top: 12px; }
.urls input { flex: 1; min-width: 0; height: 42px; padding: 0 14px; border: 1px solid #dcdcde; background: #fff; }
.urls .group .btn, .commit .group .btn:last-child { padding: 0 10px; }
.ide { padding: 18px 16px 9px; }
.ide h3 { font-size: 18px; font-weight: 600; margin-bottom: 11px; }
.ide a { display: block; padding: 8px 5px; }
.marker { position: absolute; z-index: 3; top: 34px; right: -59px; width: 540px; height: 114px; border: 5px solid #ff2014; border-radius: 4px; pointer-events: none; }

.chips { display: flex; gap: 11px; margin-top: 22px; overflow: hidden; }
.chips .btn { padding: 0 13px; flex: none; }

.files, .readme { border: 1px solid #dcdcde; border-radius: 5px; }
.files { margin-top: 21px; overflow: hidden; }
.files table { width: 100%; border-collapse: collapse; }
.files th, .files td { height: 55px; padding: 0 22px; text-align: left; }
.files th { background: #fbfafd; font-weight: 600; }
.files td { border-top: 1px solid #dcdcde; }
.files td a { display: flex; align-items: center; gap: 7px; }
.files .muted { color: #737278; }
.col-name { width: 545px; }
.ficon { width: 18px; height: 18px; }

.readme { margin-top: 22px; border-bottom: 0; }
.readme header { height: 55px; display: flex; align-items: center; gap: 6px; padding: 0 21px; border-bottom: 1px solid #dcdcde; background: #fbfafd; font-weight: 600; }
.readme header .icon { stroke: #333238; }
.md { padding: 42px; }
.md h1, .md h2 { border-bottom: 1px solid #e6e6ea; font-weight: 600; }
.md h1 { font-size: 31px; line-height: 38px; padding-bottom: 10px; }
.md h2 { margin-top: 33px; font-size: 26px; line-height: 32px; padding-bottom: 10px; }
.md p { margin-top: 22px; }
.md p a { color: #1068bf; }

.scroll { width: 20px; flex: none; display: flex; flex-direction: column; align-items: center; background: #f0f0f0; }
.scroll i { border: 5px solid transparent; }
.scroll .up { margin: 5px 0 7px; border-bottom-color: #a0a0a0; }
.scroll .down { margin: auto 0 4px; border-top-color: #505050; }
.thumb { width: 18px; height: 340px; background: #c0c0c0; }
.remote { position: absolute; right: 0; bottom: 68px; width: 29px; height: 66px; }

/* taskbar */
.taskbar { height: 53px; flex: none; display: flex; position: relative; border-top: 1px solid #777; background: #1b1b1b; color: #fff; font: 16px/24px "Open Sans", "Noto Sans CJK SC", sans-serif; }
.task { display: flex; align-items: center; }
.task svg { width: 20px; height: 20px; }
.task .big { width: 31px; height: 31px; }
.icon-only { width: 65px; justify-content: center; }
.app { width: 200px; margin-left: 11px; gap: 3px; padding: 0 8px; border-bottom: 3px solid #76b9ed; white-space: nowrap; }
.app span { flex: 1; text-align: left; }
.app.on { width: 209px; margin: 0 -4px 0 -1px; padding: 0 13px; background: #4a4a4a; }
.tray { margin-left: auto; display: flex; align-items: center; gap: 10px; padding-right: 29px; }
.tray svg { width: 22px; height: 22px; stroke: #fff; stroke-width: 1.5; }
.tray .s { stroke-width: 3; }
.ime { font-size: 20px; }
.tray .sogou { margin-left: 6px; }
.clock { width: 106px; display: flex; flex-direction: column; align-items: center; }
.watermark { position: absolute; right: 16px; bottom: 6px; font: 19px/28px "Noto Sans CJK SC", sans-serif; color: rgba(210, 210, 210, .65); }
```
